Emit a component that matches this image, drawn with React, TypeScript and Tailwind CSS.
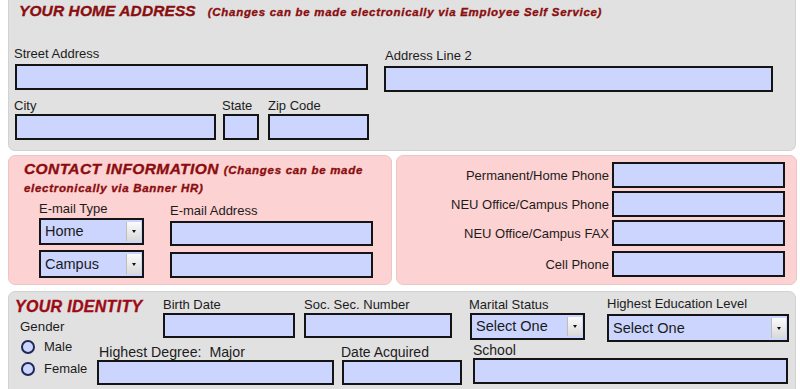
import React from "react";

const Input = ({ w, h = 26 }: { w: number; h?: number }) => (
  <div
    className="border-2 border-[#141414] bg-[#ccd5fd] box-border"
    style={{ width: w, height: h }}
  />
);

const Select = ({ w, h = 27, text }: { w: number; h?: number; text: string }) => (
  <div
    className="border-2 border-[#141414] bg-[#ccd5fd] box-border flex items-center pl-[4px] pr-[1px]"
    style={{ width: w, height: h }}
  >
    <span className="flex-1 text-[14.5px] text-[#1a1a1a] leading-none">{text}</span>
    <div className="w-[15px] h-[calc(100%-4px)] bg-gradient-to-b from-[#fbfbfb] to-[#d9d9d9] border-l border-[#bdbdbd] flex items-center justify-center">
      <div className="w-0 h-0 border-l-[2px] border-r-[2px] border-t-[3px] border-l-transparent border-r-transparent border-t-[#111]" />
    </div>
  </div>
);

const Label = ({ children, cls = "" }: { children: React.ReactNode; cls?: string }) => (
  <div className={`text-[#1c1c1c] whitespace-nowrap ${cls}`}>{children}</div>
);

const Radio = ({ label }: { label: string }) => (
  <div className="h-[22px] flex items-center">
    <div className="w-[14px] h-[14px] rounded-full border-2 border-[#1e2a55] bg-[#ccd5fd] box-border" />
    <span className="ml-[9px] text-[13px] text-[#1c1c1c]">{label}</span>
  </div>
);

const heavy = "[-webkit-text-stroke:0.35px_#8a0d0f]";

export default function App() {
  return (
    <div className="w-[800px] h-[389px] bg-white overflow-hidden pl-[8px] font-['Liberation_Sans',Arial,sans-serif]">
      {/* Panel 1 */}
      <div className="w-[788px] h-[151px] bg-[#e1e1e1] border border-t-0 border-[#d2d2d2] rounded-b-[7px] box-border">
        <div className={`h-[22px] pt-[1px] pl-[10px] leading-[20px] whitespace-nowrap text-[#8a0d0f] font-bold italic ${heavy}`}>
          <span className="text-[15.5px] tracking-[0.1px]">YOUR HOME ADDRESS</span>
          <span className="text-[11.5px] ml-[12px] tracking-[0.7px]">(Changes can be made electronically via Employee Self Service)</span>
        </div>
        <div className="flex mt-[24px] pl-[6px]">
          <div>
            <Label cls="h-[18px] -ml-[1px] text-[13px] leading-[16px]">Street Address</Label>
            <Input w={353} />
          </div>
          <div className="ml-[16px] pt-[2px]">
            <Label cls="h-[18px] ml-[1px] text-[13px] leading-[16px]">Address Line 2</Label>
            <Input w={389} />
          </div>
        </div>
        <div className="flex mt-[6px] pl-[6px]">
          <div>
            <Label cls="h-[16px] -ml-[1px] text-[13px] leading-[16px]">City</Label>
            <Input w={201} />
          </div>
          <div className="ml-[7px]">
            <Label cls="h-[16px] -ml-[1px] text-[13px] leading-[16px]">State</Label>
            <Input w={36} />
          </div>
          <div className="ml-[9px]">
            <Label cls="h-[16px] text-[13px] leading-[16px]">Zip Code</Label>
            <Input w={101} />
          </div>
        </div>
      </div>

      {/* Panel 2 */}
      <div className="flex mt-[4px] h-[130px]">
        <div className="w-[384px] h-full bg-[#fdd2d2] border border-[#ecc6c6] rounded-[7px] box-border">
          <div className={`pl-[15px] pt-[3px] text-[#8a0d0f] font-bold italic whitespace-nowrap ${heavy}`}>
            <div className="h-[20px] leading-[20px]">
              <span className="text-[15.5px] tracking-[0.4px]">CONTACT INFORMATION</span>
              <span className="text-[11.5px] ml-[5px] tracking-[0.7px]">(Changes can be made</span>
            </div>
            <div className="h-[20px] leading-[18px] text-[11.5px] tracking-[0.7px]">electronically via Banner HR)</div>
          </div>
          <div className="flex pl-[30px] mt-[2px]">
            <div>
              <Label cls="h-[17px] text-[13px] leading-[16px]">E-mail Type</Label>
              <Select w={105} text="Home" />
              <div className="h-[5px]" />
              <Select w={105} h={28} text="Campus" />
            </div>
            <div className="ml-[26px] pt-[2px]">
              <Label cls="h-[18px] text-[13px] leading-[16px]">E-mail Address</Label>
              <Input w={203} h={25} />
              <div className="h-[6px]" />
              <Input w={203} />
            </div>
          </div>
        </div>
        <div className="ml-[4px] w-[401px] h-full bg-[#fdd2d2] border border-[#ecc6c6] rounded-[7px] box-border pt-[6px] pr-[11px] flex flex-col items-end">
          {[
            ["Permanent/Home Phone", 0],
            ["NEU Office/Campus Phone", 3],
            ["NEU Office/Campus FAX", 3],
            ["Cell Phone", 5],
          ].map(([l, m]) => (
            <div key={l as string} className="flex items-center" style={{ marginTop: m as number }}>
              <span className="text-[13px] text-[#1c1c1c] mr-[3px] mt-[2px]">{l}</span>
              <Input w={173} />
            </div>
          ))}
        </div>
      </div>

      {/* Panel 3 */}
      <div className="mt-[6px] w-[788px] h-[100px] bg-[#e1e1e1] border border-[#d2d2d2] rounded-t-[7px] box-border">
        <div className="flex pt-[5px]">
          <div className="w-[154px]">
            <div className="pl-[6px] h-[20px] leading-[20px] text-[16px] tracking-[0.3px] font-bold italic text-[#9c0b14] whitespace-nowrap [-webkit-text-stroke:0.35px_#9c0b14]">YOUR IDENTITY</div>
            <Label cls="pl-[11px] pt-[2px] text-[13.3px] leading-[16px]">Gender</Label>
          </div>
          <div>
            <Label cls="h-[16px] text-[13px] leading-[16px]">Birth Date</Label>
            <Input w={132} h={25} />
          </div>
          <div className="ml-[9px]">
            <Label cls="h-[16px] text-[13px] leading-[16px]">Soc. Sec. Number</Label>
            <Input w={148} h={25} />
          </div>
          <div className="ml-[17px]">
            <Label cls="h-[16px] text-[13px] leading-[16px]">Marital Status</Label>
            <div className="ml-[1px]">
              <Select w={115} text="Select One" />
            </div>
          </div>
          <div className="ml-[22px] -mt-[1px]">
            <Label cls="h-[18px] text-[13px] leading-[16px]">Highest Education Level</Label>
            <Select w={182} h={28} text="Select One" />
          </div>
        </div>
        <div className="flex mt-[1px]">
          <div className="w-[88px] pl-[12px] -mt-[7px]">
            <Radio label="Male" />
            <Radio label="Female" />
          </div>
          <div>
            <Label cls="h-[17px] ml-[2px] text-[14.2px] leading-[18px]">Highest Degree:&nbsp; Major</Label>
            <Input w={237} h={25} />
          </div>
          <div className="ml-[7px]">
            <Label cls="h-[17px] text-[14px] leading-[18px]">Date Acquired</Label>
            <div className="ml-[1px]">
              <Input w={120} h={25} />
            </div>
          </div>
          <div className="ml-[11px]">
            <Label cls="h-[15px] text-[14px] leading-[15px]">School</Label>
            <Input w={315} />
          </div>
        </div>
      </div>
    </div>
  );
}
